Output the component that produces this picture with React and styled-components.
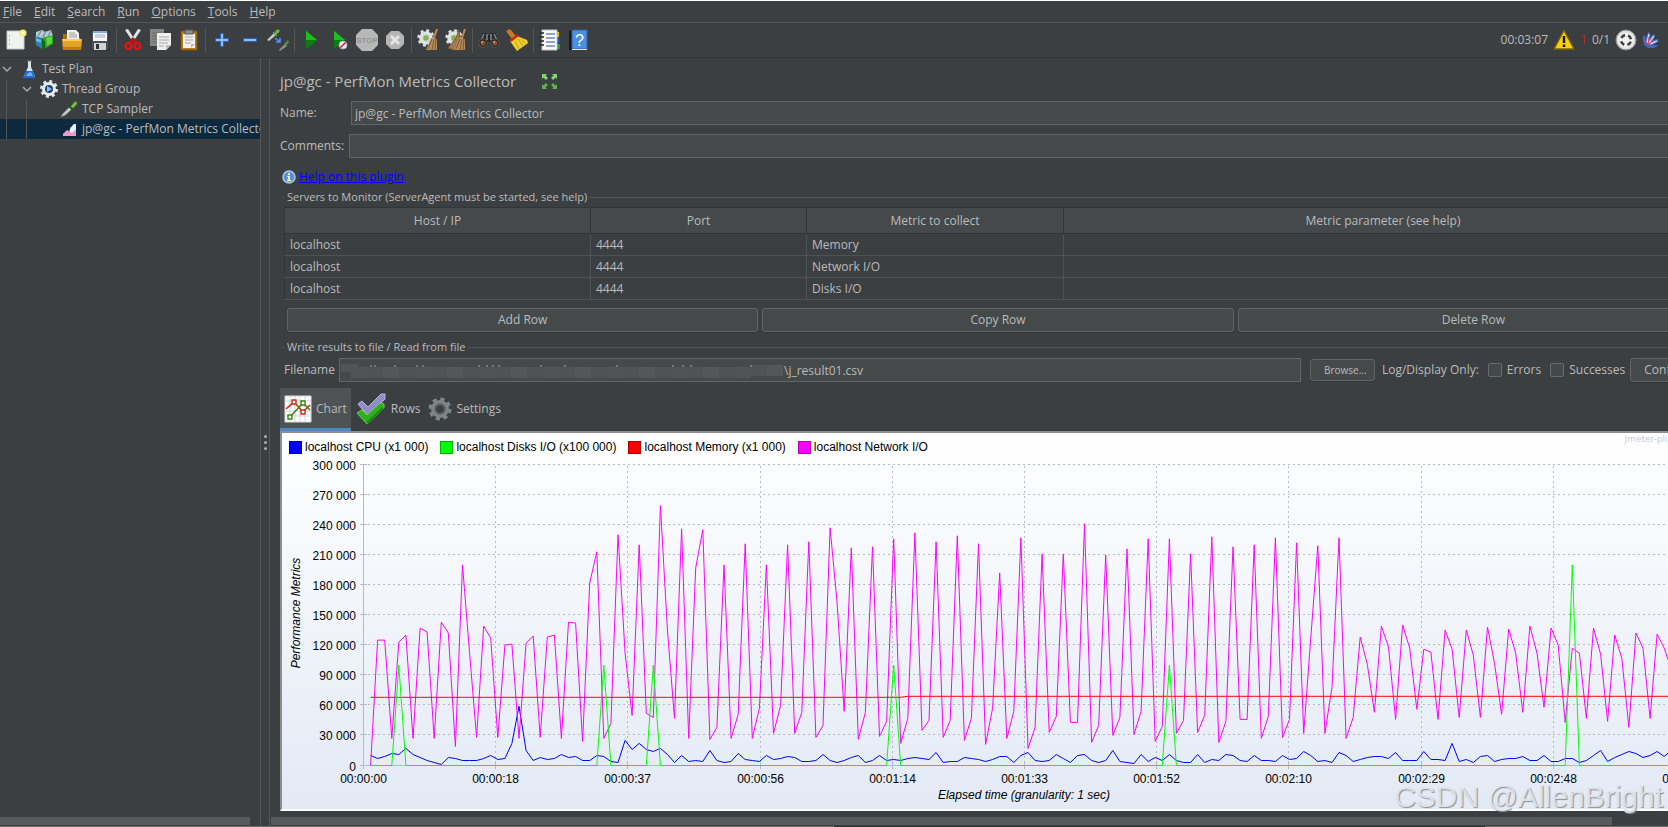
import React from "react";
import styled, { createGlobalStyle } from "styled-components";

const menus = ["File", "Edit", "Search", "Run", "Options", "Tools", "Help"];

const servers = [
    { host: "localhost", port: "4444", metric: "Memory" },
    { host: "localhost", port: "4444", metric: "Network I/O" },
    { host: "localhost", port: "4444", metric: "Disks I/O" },
];

const legend = [
    { label: "localhost CPU (x1 000)", color: "#0000ff" },
    { label: "localhost Disks I/O (x100 000)", color: "#00ff00" },
    { label: "localhost Memory (x1 000)", color: "#ff0000" },
    { label: "localhost Network I/O", color: "#ff00ff" },
];

// one value per second, in thousands, first one at second 1
const network = [
    0, 125, 125, 27, 123, 130, 27, 137, 133, 27, 143, 132, 19, 200, 113, 28, 139, 127, 28, 120,
    121, 27, 122, 129, 28, 128, 130, 27, 143, 142, 24, 182, 213, 27, 42, 230, 112, 50, 220, 52,
    48, 259, 134, 47, 236, 27, 197, 235, 26, 38, 200, 27, 51, 221, 27, 57, 200, 32, 60, 220,
    32, 53, 223, 28, 40, 237, 162, 54, 217, 26, 53, 218, 29, 44, 226, 22, 47, 232, 35, 45,
    223, 28, 45, 229, 25, 47, 221, 21, 57, 192, 27, 54, 227, 17, 38, 211, 33, 49, 211, 43,
    43, 241, 23, 40, 210, 30, 48, 216, 31, 54, 226, 24, 39, 226, 32, 45, 211, 33, 50, 228,
    23, 44, 218, 46, 46, 220, 27, 49, 227, 28, 46, 222, 32, 126, 219, 32, 78, 227, 27, 48,
    128, 101, 53, 139, 118, 46, 140, 117, 56, 116, 113, 46, 135, 116, 48, 135, 110, 48, 138, 102,
    51, 136, 112, 53, 139, 112, 58, 137, 120, 43, 117, 112, 47, 137, 111, 44, 130, 107, 38, 132,
    117, 47, 131, 117, 96, 50,
];

const cpu = [
    10, 7, 9, 12, 11, 17, 11, 8, 5, 3, 1, 8, 7, 5, 5, 5, 7, 10, 6, 7,
    22, 59, 15, 5, 8, 6, 7, 11, 8, 9, 5, 5, 10, 9, 4, 3, 25, 16, 22, 16,
    14, 17, 11, 3, 10, 4, 5, 4, 15, 5, 3, 4, 12, 6, 5, 4, 10, 6, 7, 9,
    8, 4, 4, 5, 11, 5, 3, 5, 8, 10, 3, 5, 10, 5, 6, 5, 7, 8, 7, 6,
    13, 3, 4, 4, 8, 7, 6, 4, 6, 9, 9, 3, 10, 13, 5, 4, 5, 11, 7, 3,
    10, 11, 5, 3, 5, 15, 4, 3, 2, 11, 4, 8, 5, 11, 5, 3, 3, 11, 3, 6,
    5, 11, 10, 5, 4, 10, 5, 5, 4, 10, 6, 7, 14, 10, 4, 5, 3, 13, 10, 4,
    6, 8, 9, 9, 7, 13, 5, 5, 5, 14, 6, 6, 5, 22, 4, 6, 3, 9, 10, 4,
    6, 7, 7, 9, 5, 5, 10, 4, 4, 7, 7, 3, 5, 10, 15, 4, 8, 11, 14, 12,
    8, 10, 14, 9, 15, 12,
];

const diskPeaks = { 5: 100, 34: 100, 41: 100, 75: 100, 114: 100, 171: 200 };
const disks = network.map((_, i) => diskPeaks[i + 1] || 0);
const memory = network.map((_, i) => (i < 76 ? 68 : 69));

const times = ["00:00:00", "00:00:18", "00:00:37", "00:00:56", "00:01:14", "00:01:33", "00:01:52", "00:02:10", "00:02:29", "00:02:48", "00:03:07"];

const PLOT = { left: 81, top: 7, bottom: 308, second: 7.069, tick: 132.2, right: 1402 };

function toPoints(values) {
    return values
        .map((v, i) => {
            const x = PLOT.left + 0.5 + (i + 1) * PLOT.second;
            const y = PLOT.bottom + 0.5 - v * 1.003;
            return `${x.toFixed(1)},${y.toFixed(1)}`;
        })
        .join(" ");
}

/* ---------- icons ---------- */

function NewIcon() {
    return (
        <Icon viewBox="0 0 22 22">
            <path d="M2 2h17v18H2z" fill="#f1f1f0" stroke="#c9c9c7" />
            <path d="M4 7h1M4 11h1M4 15h1" stroke="#888" />
            <circle cx="18" cy="4" r="3.6" fill="#f3e868" />
            <circle cx="18" cy="4" r="1.8" fill="#fffde0" />
        </Icon>
    );
}

function TemplatesIcon() {
    return (
        <Icon viewBox="0 0 22 22">
            <path d="M3 3l6-2 3 2 6-2 2 6-8 3-9-2z" fill="#b9cbd3" />
            <path d="M5 7l3-5M10 8l3-6M15 7l3-5" stroke="#6d8996" strokeWidth="1.2" />
            <path d="M2 7l7 2v11l-6-4z" fill="#2c7fb4" />
            <path d="M3 9l5 2v3l-5-2z" fill="#6fb6de" />
            <path d="M9 9l11-3v9l-9 5-2-1z" fill="#22a527" />
            <path d="M13 9l6-2v7l-5 3z" fill="#5fd63c" />
            <path d="M9 9l3 4v8l-3-1z" fill="#0f6b1b" />
        </Icon>
    );
}

function OpenIcon() {
    return (
        <Icon viewBox="0 0 22 22">
            <path d="M2 11V5h6l2 3h9v4z" fill="#a86d10" />
            <path d="M6 1h9l3 3v9H6z" fill="#f0f0ef" />
            <path d="M8 4h6M8 6h8M8 8h8" stroke="#999" />
            <path d="M1 10h18l2 1-1 10H2z" fill="#e6a325" />
            <path d="M1 10h20l-1 2H2z" fill="#f6cc66" />
            <path d="M2 18h18v3H2z" fill="#bd7d12" />
        </Icon>
    );
}

function SaveIcon() {
    return (
        <Icon viewBox="0 0 22 22">
            <path d="M2 2h18v19H4l-2-2z" fill="#4c5053" stroke="#2c2e30" />
            <path d="M4 2h14v10H4z" fill="#f2f5fa" />
            <path d="M4 2h14v2H4z" fill="#87a9dc" />
            <path d="M6 6h10M6 8h10" stroke="#a5adb8" />
            <path d="M5 14h12v7H5z" fill="#d0d2d4" />
            <path d="M7 15h3v5H7z" fill="#2e3133" />
        </Icon>
    );
}

function CutIcon() {
    return (
        <Icon viewBox="0 0 22 22">
            <path d="M3 1l8 12 2-2L6 0zM19 1l-8 12-2-2 7-11z" fill="#e4e4e4" />
            <path d="M11 10l3 4M11 10l-3 4" stroke="#c01111" strokeWidth="3" />
            <circle cx="6.500" cy="17" r="3" fill="none" stroke="#d81414" strokeWidth="2.600" />
            <circle cx="15.500" cy="17" r="3" fill="none" stroke="#d81414" strokeWidth="2.600" />
        </Icon>
    );
}

function CopyIcon() {
    return (
        <Icon viewBox="0 0 22 22">
            <path d="M0 0h14v17H0z" fill="#858585" />
            <path d="M2 4h10M2 7h8M2 10h6M2 13h6" stroke="#6b6b6b" />
            <path d="M7 4h14v12l-5 5H7z" fill="#efefee" />
            <path d="M9 8h10M9 11h10M9 14h9M9 17h5" stroke="#a8a8a8" />
            <path d="M16 21v-5h5z" fill="#bdbdbd" />
        </Icon>
    );
}

function PasteIcon() {
    return (
        <Icon viewBox="0 0 22 22">
            <path d="M3 2h16v19H3z" fill="#b57c1c" stroke="#7c500b" />
            <path d="M5 5h12v14H5z" fill="#f1f1f0" />
            <path d="M7 8h8M7 11h8M7 14h6" stroke="#a3a3a3" />
            <path d="M13 19v-4h4z" fill="#bcbcbc" />
            <path d="M7 1h8v4H7z" fill="#8c9096" stroke="#54575b" />
        </Icon>
    );
}

function PlusIcon({ minus }) {
    return (
        <Icon viewBox="0 0 22 22">
            <path d={minus ? "M4 11h14" : "M4 11h14M11 4v14"} stroke="#2b62b8" strokeWidth="4" />
            <path d={minus ? "M5 11h12" : "M5 11h12M11 5v12"} stroke="#8ebdf2" strokeWidth="2" />
        </Icon>
    );
}

function PipetteIcon({ size }) {
    return (
        <Icon viewBox="0 0 22 22" $size={size}>
            <path d="M1 21l2-4 9-9 3 3-9 8z" fill="#c9cfc9" stroke="#5f6660" />
            <path d="M10 6l6 6" stroke="#2d4f22" strokeWidth="3" />
            <path d="M13 8l5-6 2 0 1 3-5 5z" fill="#74c452" stroke="#3d7e28" />
        </Icon>
    );
}

function ToggleIcon() {
    return (
        <Icon viewBox="0 0 22 22">
            <path d="M0 11l7-7 2 2-7 6z" fill="#c4ccc2" />
            <path d="M6 3l4 4M7 5l3-4 2 0 0 2-4 3z" fill="#67b846" stroke="#67b846" />
            <path d="M8 9l5 4M13 9v4H9" stroke="#4f93ee" strokeWidth="1.600" fill="none" />
            <path d="M12 21l6-6 2 2-7 5z" fill="#909590" />
            <path d="M17 15l4-4 1 2-3 4z" fill="#5c8a4b" />
        </Icon>
    );
}

function StartIcon({ noPause }) {
    return (
        <Icon viewBox="0 0 22 22">
            <path d="M6 2l11 9-11 9z" fill="#12a312" />
            <path d="M6 2l11 9H6z" fill="#1cc01c" />
            <path d="M6 20l11-9H6z" fill="#087d0b" />
            {noPause && (
                <g>
                    <circle cx="15" cy="16" r="4" fill="#e9eef8" stroke="#a4b4d2" />
                    <path d="M12 19l6-6" stroke="#d72222" strokeWidth="1.600" />
                </g>
            )}
        </Icon>
    );
}

function StopIcon() {
    return (
        <Icon viewBox="0 0 22 22">
            <path d="M6 0h10l6 6v10l-6 6H6l-6-6V6z" fill="#b7b7b7" />
            <text x="11" y="14" fontSize="8" fontWeight="bold" fontFamily="Liberation Sans, sans-serif" textAnchor="middle" fill="#949494">STOP</text>
        </Icon>
    );
}

function ShutdownIcon() {
    return (
        <Icon viewBox="0 0 22 22">
            <path d="M7 2h8l5 5v8l-5 5H7l-5-5V7z" fill="#b5b5b5" />
            <path d="M7 7l8 8M15 7l-8 8" stroke="#e6e6e6" strokeWidth="2.800" />
        </Icon>
    );
}

function ClearIcon({ all }) {
    return (
        <Icon viewBox="0 0 22 22">
            <circle cx="9" cy="9" r="7.500" fill="none" stroke="#dfe3e3" strokeWidth="2.400" strokeDasharray="3 2.890" />
            <circle cx="9" cy="9" r="6.800" fill="#dfe3e3" />
            <circle cx="9" cy="9" r="3" fill="#7fb93c" stroke="#b5bdb5" />
            {all && <path d="M14 1l-3 8-8 10 6 2 6-10z" fill="#a37a4d" stroke="#7d5933" />}
            <path d="M20 0l-3 9" stroke="#c08a4c" strokeWidth="2" />
            <path d="M14 9l6 1v11H9z" fill="#b58d5d" />
            <path d="M15 10l-4 10M17 10l-2 11M19 10l-1 11" stroke="#7d5933" />
        </Icon>
    );
}

function SearchIcon() {
    return (
        <Icon viewBox="0 0 22 22">
            <path d="M5 4h4l2 3 2-3h4l5 10-8 2-3-4-3 4-8-2z" fill="#25282a" />
            <path d="M6 5l-3 6M9 5v6M13 5v6M16 5l3 6" stroke="#858a8d" strokeWidth="1.500" />
            <circle cx="5" cy="14" r="4.200" fill="#1b1c1d" stroke="#5d6164" />
            <circle cx="17" cy="14" r="4.200" fill="#1b1c1d" stroke="#5d6164" />
            <circle cx="5" cy="14" r="2.600" fill="#8f502c" />
            <circle cx="17" cy="14" r="2.600" fill="#8f502c" />
            <circle cx="4" cy="13" r="1" fill="#d9a37a" />
            <circle cx="16" cy="13" r="1" fill="#d9a37a" />
        </Icon>
    );
}

function ResetIcon() {
    return (
        <Icon viewBox="0 0 22 22">
            <path d="M0 2l4-2 6 7-4 3z" fill="#c47c22" />
            <path d="M11 7l10 4 1 3-11 8-7-10z" fill="#f0d02a" />
            <path d="M9 12l4 8M12 10l5 7M15 10l4 4" stroke="#c79f12" />
            <path d="M4 11l7-6 2 2-8 6z" fill="#d4231e" />
        </Icon>
    );
}

function FunctionIcon() {
    return (
        <Icon viewBox="0 0 22 22">
            <path d="M17 3h3v5h-3z" fill="#e6b524" />
            <path d="M17 9h4v5h-4z" fill="#1b52b8" />
            <path d="M17 15h4v5h-4z" fill="#2ba02b" />
            <path d="M3 1h15v20H3z" fill="#fafafa" stroke="#c2c2c2" />
            <path d="M7 5h9M7 9h9M7 13h9M7 17h9" stroke="#2352a0" strokeWidth="1.200" />
            <path d="M1 4h4M1 8h4M1 12h4M1 16h4" stroke="#222" strokeWidth="1.500" />
        </Icon>
    );
}

function HelpIcon() {
    return (
        <Icon viewBox="0 0 22 22">
            <path d="M2 2l3-1v20H2z" fill="#17191b" />
            <path d="M5 1h15v19H5z" fill="#4d8fe0" stroke="#2f62a8" />
            <path d="M5 20h15v1H5z" fill="#e4e4e4" />
            <text x="12.500" y="16.500" fontSize="16" fontFamily="Liberation Sans, sans-serif" textAnchor="middle" fill="#fff">?</text>
        </Icon>
    );
}

function WarningIcon() {
    return (
        <Icon viewBox="0 0 22 22">
            <path d="M11 1.500L21 20H1z" fill="#f8cf08" stroke="#7a6504" strokeWidth="1.500" strokeLinejoin="round" />
            <path d="M11 7v7M11 15.500v2.500" stroke="#111" strokeWidth="2.400" />
        </Icon>
    );
}

function ThreadsIcon() {
    return (
        <Icon viewBox="0 0 22 22">
            <circle cx="11" cy="11" r="10" fill="#e0e0e0" stroke="#8b8b8b" />
            <circle cx="11" cy="11" r="7.500" fill="#f1f1f1" />
            <circle cx="11" cy="11" r="5" fill="none" stroke="#404244" strokeWidth="2.600" strokeDasharray="4.600 3.254" strokeDashoffset="-1.600" />
        </Icon>
    );
}

function FeatherIcon() {
    return (
        <Icon viewBox="0 0 18 18" $size={18}>
            <path d="M2 14Q0 9 1 5l2-1 1 3 2-6 2 1v4l3-3 2 1-2 5 5-1 1 2-6 4 4 0 1 1-4 2H6z" fill="#3f66bb" />
            <path d="M5 12l2-9M7 12l5-7M8 13l7-3" stroke="#c5d8ff" strokeWidth="1.500" />
            <path d="M2 10l6 4M7 6l-1 8M11 8l-4 6" stroke="#e2444e" />
        </Icon>
    );
}

function FlaskIcon() {
    return (
        <Icon viewBox="0 0 18 18" $size={18}>
            <path d="M8 1h3v6l4 9q0 2-2 2H5q-2 0-1-2l4-9z" fill="#d7e4ee" />
            <path d="M6 11h7l2 5q0 2-2 2H5q-2 0-1-2z" fill="#2268cf" />
            <path d="M8 13l3-1 2 4H6z" fill="#68b2fa" />
            <path d="M7 1h5" stroke="#6d7c88" />
        </Icon>
    );
}

function ThreadGroupIcon() {
    return (
        <Icon viewBox="0 0 18 18" $size={18}>
            <circle cx="9" cy="9" r="7.500" fill="none" stroke="#dfe6ea" strokeWidth="3" strokeDasharray="2.950 2.940" />
            <circle cx="9" cy="9" r="7" fill="#e5ebef" />
            <circle cx="9" cy="9" r="4" fill="#24466e" />
            <path d="M7 6l5 3-5 3z" fill="#8fbdec" />
        </Icon>
    );
}

function PerfMonIcon() {
    return (
        <Icon viewBox="0 0 18 18" $size={18}>
            <path d="M1.500 1v15.500H17" stroke="#15202b" strokeDasharray="1 1" fill="none" />
            <path d="M10 16V8l4-4h2v12z" fill="#a9cdf8" />
            <path d="M3 16v-2l4-4 3 2 3-3 3 3v4z" fill="#ee9ad2" />
            <path d="M9 11l5-7h2v5l-4 4z" fill="#e6f1ff" />
        </Icon>
    );
}

function InfoIcon() {
    return (
        <Icon viewBox="0 0 14 14" $size={14}>
            <circle cx="7" cy="7" r="6" fill="#5b90cd" stroke="#a6caef" strokeWidth="1.500" />
            <path d="M7 3v2M5.500 6.500H7V10M5 10.500h4" stroke="#fff" strokeWidth="1.500" fill="none" />
        </Icon>
    );
}

function ExpandIcon() {
    return (
        <Icon viewBox="0 0 17 17" $size={17}>
            <path d="M1 1h5L4.500 2.500 7 5 5 7 2.500 4.500 1 6zM16 1h-5l1.500 1.500L10 5l2 2 2.500-2.500L16 6z" fill="#84d873" />
            <path d="M1 16h5l-1.500-1.500L7 12l-2-2-2.500 2.500L1 11zM16 16h-5l1.500-1.500L10 12l2-2 2.500 2.500L16 11z" fill="#5db252" />
        </Icon>
    );
}

function ChartTabIcon() {
    return (
        <Icon viewBox="0 0 28 28" $size={28}>
            <path d="M1 1h26v26H1z" fill="#fff" stroke="#dadada" />
            <path d="M6 1v26M11 1v26M16 1v26M21 1v26M1 6h26M1 11h26M1 16h26M1 21h26" stroke="#d5d5d5" />
            <path d="M2 14l8-7 9 10 7-7" stroke="#c92a1d" strokeWidth="1.500" fill="none" />
            <path d="M5 23l14-15 7 7" stroke="#368714" strokeWidth="1.500" fill="none" />
            <path d="M8 5h4v4H8zM17 15h4v4h-4z" fill="#fff" stroke="#c92a1d" strokeWidth="1.400" />
            <path d="M4 20h4v4H4zM17 6h4v4h-4z" fill="#fff" stroke="#368714" strokeWidth="1.400" />
        </Icon>
    );
}

function RowsTabIcon() {
    return (
        <Icon viewBox="0 0 32 32" $size={32}>
            <path d="M3 11l4-3 6 6L26 1l4 0 0 5L13 23z" fill="#8f8cc8" stroke="#b9b7e0" />
            <path d="M2 20l5-3 5 5 13-12 4 1v4L12 31z" fill="#2fae1e" stroke="#6bd24f" />
            <path d="M12 30l16-15" stroke="#17870f" strokeWidth="2" />
        </Icon>
    );
}

function SettingsTabIcon() {
    return (
        <Icon viewBox="0 0 24 24" $size={24}>
            <circle cx="12" cy="12" r="9.500" fill="none" stroke="#7e8788" strokeWidth="4" strokeDasharray="4 3.460" />
            <circle cx="12" cy="12" r="6.500" fill="none" stroke="#7e8788" strokeWidth="5" />
            <circle cx="12" cy="12" r="5" fill="none" stroke="#59615f" strokeWidth="1.500" />
        </Icon>
    );
}

function Chevron() {
    return (
        <Icon viewBox="0 0 10 10" $size={10}>
            <path d="M1 3l4 4 4-4" stroke="#aaa" strokeWidth="1.500" fill="none" />
        </Icon>
    );
}

// covered part of the path in the filename box
function HiddenPath() {
    const blocks = Array.from({ length: 27 }, (_, i) => i);
    const bits = [30, 34, 54, 76, 82, 138, 146, 152, 158, 200, 224, 276, 332, 342, 350, 410];
    return (
        <Mosaic viewBox="0 0 442 18" preserveAspectRatio="none" aria-hidden="true">
            <rect x="0" y="3" width="17" height="8" fill="#505455" />
            {blocks.map((i) => (
                <rect key={i} x={10 + i * 16} y={i > 24 ? 4 : 6} width="16" height="11" fill={["#505455", "#4e5253", "#535758", "#4f5354"][(i * 7) % 4]} />
            ))}
            {bits.map((x) => (
                <path key={x} d={`M${x} 4v2`} stroke="#a3a5a6" />
            ))}
        </Mosaic>
    );
}

const toolGroups = [
    [["New", <NewIcon />], ["Templates", <TemplatesIcon />], ["Open", <OpenIcon />], ["Save", <SaveIcon />]],
    [["Cut", <CutIcon />], ["Copy", <CopyIcon />], ["Paste", <PasteIcon />]],
    [["Expand all", <PlusIcon />], ["Collapse all", <PlusIcon minus />], ["Toggle", <ToggleIcon />]],
    [["Start", <StartIcon />], ["Start no pauses", <StartIcon noPause />], ["Stop", <StopIcon />], ["Shutdown", <ShutdownIcon />]],
    [["Clear", <ClearIcon />], ["Clear all", <ClearIcon all />]],
    [["Search", <SearchIcon />], ["Reset search", <ResetIcon />]],
    [["Function helper", <FunctionIcon />], ["Help", <HelpIcon />]],
];

function Toolbar() {
    return (
        <ToolbarRow>
            {toolGroups.map((group, g) => (
                <React.Fragment key={g}>
                    {g > 0 && <Separator />}
                    {group.map(([name, icon]) => (
                        <ToolButton key={name} aria-label={name}>{icon}</ToolButton>
                    ))}
                </React.Fragment>
            ))}
            <Status>
                <span>00:03:07</span>
                <WarningIcon />
                <ErrorCount>1</ErrorCount>
                <span>0/1</span>
                <ThreadsIcon />
                <FeatherIcon />
            </Status>
        </ToolbarRow>
    );
}

function Tree() {
    return (
        <TreePane>
            <TreeRow $level={0}><Chevron /><TreeIcon><FlaskIcon /></TreeIcon>Test Plan</TreeRow>
            <TreeRow $level={1} $guides={1}><Chevron /><TreeIcon><ThreadGroupIcon /></TreeIcon>Thread Group</TreeRow>
            <TreeRow $level={2} $guides={2}><TreeIcon><PipetteIcon size={18} /></TreeIcon>TCP Sampler</TreeRow>
            <TreeRow $level={2} $guides={2} $selected><TreeIcon><PerfMonIcon /></TreeIcon>jp@gc - PerfMon Metrics Collector</TreeRow>
            <ScrollTrack $start={0}><ScrollThumb $width="96%" /></ScrollTrack>
        </TreePane>
    );
}

function Chart() {
    return (
        <ChartPanel>
            <LegendRow>
                {legend.map((item) => (
                    <LegendItem key={item.label}><Swatch $color={item.color} />{item.label}</LegendItem>
                ))}
                <Credit>jmeter-plugins.org</Credit>
            </LegendRow>
            <Plot role="img" aria-label="Performance Metrics">
                {times.map((t, i) => {
                    const x = Math.round(PLOT.left + i * PLOT.tick) + 0.5;
                    return (
                        <g key={t}>
                            {i > 0 && <path d={`M${x} ${PLOT.top + 2}V${PLOT.bottom}`} stroke="#b4bac6" strokeDasharray="2 3" />}
                            <path d={`M${x} ${PLOT.bottom - 3}v7`} stroke="#b4bac6" />
                            <text x={x} y="326" textAnchor="middle">{t}</text>
                        </g>
                    );
                })}
                {Array.from({ length: 11 }, (_, i) => {
                    const y = i === 10 ? PLOT.bottom + 0.5 : PLOT.top + i * 30 + 0.5;
                    const value = 300 - i * 30;
                    return (
                        <g key={i}>
                            <path d={`M${PLOT.left} ${y}H${PLOT.right}`} stroke="#b4bac6" strokeDasharray={i === 10 ? "none" : "2 3"} />
                            <path d={`M${PLOT.left - 3} ${y}h7`} stroke="#b4bac6" />
                            <text x="74" y={y + 5} textAnchor="end">{value === 0 ? "0" : `${value} 000`}</text>
                        </g>
                    );
                })}
                <path d={`M${PLOT.left + 0.5} ${PLOT.top}V${PLOT.bottom + 4}`} stroke="#b4bac6" />
                <Line points={toPoints(cpu)} $color="#0000ff" />
                <Line points={toPoints(network)} $color="#ff00ff" />
                <Line points={toPoints(memory)} $color="#ff0000" />
                <Line points={toPoints(disks)} $color="#00ff00" />
                <AxisTitle x="742" y="342" textAnchor="middle">Elapsed time (granularity: 1 sec)</AxisTitle>
                <AxisTitle transform="translate(18 156) rotate(-90)" textAnchor="middle">Performance Metrics</AxisTitle>
            </Plot>
        </ChartPanel>
    );
}

export default function App() {
    const [tab, setTab] = React.useState("Chart");
    const [name, setName] = React.useState("jp@gc - PerfMon Metrics Collector");
    const [comments, setComments] = React.useState("");
    const [filename, setFilename] = React.useState("\\j_result01.csv");

    const tabs = [["Chart", <ChartTabIcon />], ["Rows", <RowsTabIcon />], ["Settings", <SettingsTabIcon />]];

    return (
        <Window>
            <GlobalStyle />
            <MenuBar>
                {menus.map((m) => (
                    <MenuButton key={m}><u>{m[0]}</u>{m.slice(1)}</MenuButton>
                ))}
            </MenuBar>
            <Toolbar />
            <Body>
                <Tree />
                <Divider><i /><i /><i /></Divider>
                <Main>
                    <Content>
                        <TitleRow>
                            <h1>{name}</h1>
                            <ExpandIcon />
                        </TitleRow>
                        <Field>
                            <FieldLabel htmlFor="name" $width={71}>Name:</FieldLabel>
                            <TextInput id="name" value={name} onChange={(e) => setName(e.target.value)} />
                        </Field>
                        <Field>
                            <FieldLabel htmlFor="comments" $width={69}>Comments:</FieldLabel>
                            <TextInput id="comments" value={comments} onChange={(e) => setComments(e.target.value)} />
                        </Field>
                        <HelpRow>
                            <InfoIcon />
                            <a href="#help">Help on this plugin</a>
                        </HelpRow>
                        <Group>
                            <legend>Servers to Monitor (ServerAgent must be started, see help)</legend>
                            <Table>
                                <colgroup>
                                    <col width="306" />
                                    <col width="216" />
                                    <col width="257" />
                                    <col />
                                </colgroup>
                                <thead>
                                    <tr>
                                        <th>Host / IP</th>
                                        <th>Port</th>
                                        <th>Metric to collect</th>
                                        <th>Metric parameter (see help)</th>
                                    </tr>
                                </thead>
                                <tbody>
                                    {servers.map((s) => (
                                        <tr key={s.metric}>
                                            <td>{s.host}</td>
                                            <td>{s.port}</td>
                                            <td>{s.metric}</td>
                                            <td></td>
                                        </tr>
                                    ))}
                                </tbody>
                            </Table>
                            <RowButtons>
                                <Button>Add Row</Button>
                                <Button>Copy Row</Button>
                                <Button>Delete Row</Button>
                            </RowButtons>
                        </Group>
                        <Group>
                            <legend>Write results to file / Read from file</legend>
                            <FileRow>
                                <FieldLabel htmlFor="filename" $width={55}>Filename</FieldLabel>
                                <FileBox>
                                    <TextInput id="filename" $indent={444} value={filename} onChange={(e) => setFilename(e.target.value)} />
                                    <HiddenPath />
                                </FileBox>
                                <Button $small>Browse...</Button>
                                <span>Log/Display Only:</span>
                                <Check><input type="checkbox" />Errors</Check>
                                <Check><input type="checkbox" />Successes</Check>
                                <Button $wide>Configure</Button>
                            </FileRow>
                        </Group>
                        <Tabs>
                            {tabs.map(([label, icon]) => (
                                <Tab key={label} $active={tab === label} onClick={() => setTab(label)}>{icon}{label}</Tab>
                            ))}
                        </Tabs>
                        <Chart />
                    </Content>
                    <ScrollTrack $start={1}><ScrollThumb $width="96%" /></ScrollTrack>
                    <Watermark>CSDN @AllenBright</Watermark>
                </Main>
            </Body>
            <BottomEdge />
        </Window>
    );
}

const GlobalStyle = createGlobalStyle`
    * {
        box-sizing: border-box;
    }

    body {
        margin: 0;
        background: #3c3f41;
        color: #bbbbbb;
        font-family: "Open Sans", "Noto Sans", sans-serif;
        font-size: 12px;
        line-height: 16px;
        overflow: hidden;
    }

    button, input {
        font: inherit;
        color: inherit;
    }
`

const Window = styled.div`
    height: 100vh;
    display: flex;
    flex-direction: column;
    border-top: 1px solid #ffffff;
`

const Icon = styled.svg`
    width: ${props => props.$size || 22}px;
    height: ${props => props.$size || 22}px;
    flex: none;
    display: block;
    fill: none;
`

const MenuBar = styled.nav`
    display: flex;
    gap: 12px;
    height: 22px;
    padding: 0 3px;
    border-bottom: 1px solid #555555;
`

const MenuButton = styled.button`
    border: 0;
    padding: 0;
    background: none;
`

const ToolbarRow = styled.div`
    display: flex;
    align-items: center;
    height: 35px;
    padding: 0 8px 0 2px;
    border-bottom: 1px solid #323537;
`

const ToolButton = styled.button`
    width: 28px;
    height: 28px;
    padding: 0 3px;
    border: 0;
    background: none;
`

const Separator = styled.span`
    width: 1px;
    height: 25px;
    margin: 0 2px;
    background: #555555;
`

const Status = styled.div`
    display: flex;
    align-items: center;
    gap: 5px;
    margin-left: auto;
`

const ErrorCount = styled.span`
    color: #e01010;
`

const Body = styled.div`
    flex: 1;
    min-height: 0;
    display: flex;
`

const TreePane = styled.aside`
    width: 261px;
    flex: none;
    display: flex;
    flex-direction: column;
    border-right: 1px solid #555555;
    padding-top: 1px;
    overflow: hidden;
`

const guides = [
    "none",
    "linear-gradient(#555555, #555555) 6px 0 / 1px 100% no-repeat",
    "linear-gradient(#555555, #555555) 6px 0 / 1px 100% no-repeat, linear-gradient(#555555, #555555) 26px 0 / 1px 100% no-repeat",
]

const TreeRow = styled.div`
    display: flex;
    align-items: center;
    height: 20px;
    padding-left: ${props => [2, 22, 60][props.$level]}px;
    background: ${props => guides[props.$guides || 0]};
    background-color: ${props => (props.$selected ? "#0d293e" : "transparent")};
    white-space: nowrap;
`

const TreeIcon = styled.span`
    margin: 0 4px 0 0;

    svg + & {
        margin-left: 8px;
    }
`

const Divider = styled.div`
    width: 9px;
    flex: none;
    display: flex;
    flex-direction: column;
    align-items: center;
    justify-content: center;
    gap: 3px;
    border-right: 1px solid #555555;

    i {
        width: 3px;
        height: 3px;
        border-radius: 50%;
        background: #adadad;
    }
`

const Main = styled.main`
    flex: 1;
    min-width: 0;
    position: relative;
    display: flex;
    flex-direction: column;
    overflow: hidden;
`

const Content = styled.div`
    flex: 1;
    width: calc(100% + 44px);
    display: flex;
    flex-direction: column;
    padding-left: 10px;
`

const TitleRow = styled.div`
    display: flex;
    align-items: center;
    gap: 25px;
    height: 43px;
    padding-top: 3px;

    h1 {
        margin: 0;
        font-size: 15px;
        line-height: 20px;
        font-weight: 400;
    }
`

const Field = styled.div`
    display: flex;
    align-items: center;
    margin-bottom: 9px;
`

const FieldLabel = styled.label`
    width: ${props => props.$width}px;
    flex: none;
`

const TextInput = styled.input`
    flex: 1;
    min-width: 0;
    height: 24px;
    padding: 0 3px 0 ${props => props.$indent || 3}px;
    border: 1px solid #646464;
    background: #45494a;
`

const HelpRow = styled.div`
    display: flex;
    align-items: center;
    gap: 3px;
    height: 20px;
    margin-bottom: 2px;
    padding-left: 2px;

    a {
        color: #0000ff;
    }
`

const Group = styled.fieldset`
    margin: 0 0 0 2px;
    padding: 0 3px 0 2px;
    border: 0;
    border-top: 1px solid #555555;
    min-width: 0;

    legend {
        margin: 0;
        padding: 0 3px;
        font-size: 11px;
    }

    & + & {
        margin-top: 7px;
    }
`

const Table = styled.table`
    width: calc(100% - 6px);
    table-layout: fixed;
    border-collapse: collapse;
    border-bottom: 1px solid #323537;
    margin: 2px 0 8px;

    th {
        height: 26px;
        padding: 0;
        font-weight: 400;
        background: #45494b;
        border: 1px solid #323537;
    }

    td {
        height: 22px;
        padding: 0 5px;
        border: 1px solid #4f5254;
    }

    td:first-child {
        border-left-color: #323537;
    }
`

const Button = styled.button`
    height: ${props => (props.$small ? 22 : 24)}px;
    padding: ${props => (props.$wide ? "0 9px 0 13px" : "0 13px")};
    flex: ${props => (props.$small || props.$wide ? "none" : "1 1 0")};
    width: ${props => (props.$small ? "65px" : "auto")};
    font-size: ${props => (props.$small ? 10 : 12)}px;
    border: 1px solid #646464;
    border-radius: 3px;
    background: #45494a;
    box-shadow: 0 1px 0 #333638;
`

const RowButtons = styled.div`
    display: flex;
    gap: 4px;
    padding-left: 3px;
`

const FileRow = styled.div`
    display: flex;
    align-items: center;
    height: 24px;
    margin-top: 3px;

    > button {
        margin: 0 7px 0 9px;
    }

    > button:last-child {
        margin: 0 0 0 5px;
    }
`

const FileBox = styled.div`
    flex: 1;
    position: relative;
    display: flex;
`

const Mosaic = styled.svg`
    position: absolute;
    left: 2px;
    top: 3px;
    width: 442px;
    height: 18px;
`

const Check = styled.label`
    display: flex;
    align-items: center;
    gap: 5px;
    margin-left: 9px;

    input {
        appearance: none;
        width: 14px;
        height: 14px;
        margin: 0;
        border: 1px solid #6b6b6b;
        border-radius: 2px;
        background: #43494a;
    }
`

const Tabs = styled.div`
    display: flex;
    height: 43px;
    margin-top: 6px;
`

const Tab = styled.button`
    display: flex;
    align-items: center;
    gap: 4px;
    padding: 2px 4px 0;
    border: 0;
    border-bottom: 3px solid ${props => (props.$active ? "#4a88c7" : "transparent")};
    background: ${props => (props.$active ? "#4e5254" : "none")};
`

const ChartPanel = styled.section`
    flex: 1;
    display: flex;
    flex-direction: column;
    border: 1px solid #ffffff;
    border-top: 2px solid #8d8d8d;
    border-left: 2px solid #8d8d8d;
    border-bottom-width: 2px;
    background: linear-gradient(#ffffff, #e3eaf5);
    color: #000000;
    font-family: "Liberation Sans", Arial, sans-serif;
    margin-bottom: 6px;
`

const LegendRow = styled.div`
    display: flex;
    align-items: center;
    gap: 12px;
    height: 24px;
    padding: 4px 0 0 7px;
`

const LegendItem = styled.span`
    display: flex;
    align-items: center;
    gap: 3px;
`

const Swatch = styled.i`
    width: 13px;
    height: 13px;
    background: ${props => props.$color};
    border: 1px solid rgba(0, 0, 0, 0.3);
`

const Credit = styled.span`
    margin: 0 4px 16px auto;
    font-family: "DejaVu Sans", sans-serif;
    font-size: 9px;
    line-height: 12px;
    color: #c8cdd6;
`

const Plot = styled.svg`
    flex: 1;
    width: 100%;
    min-height: 346px;
    font-size: 12px;

    path {
        shape-rendering: crispEdges;
    }
`

const Line = styled.polyline`
    fill: none;
    stroke: ${props => props.$color};
    stroke-width: 1;
`

const AxisTitle = styled.text`
    font-style: italic;
`

const ScrollTrack = styled.div`
    flex: none;
    height: 9px;
    margin-top: auto;
    padding: 0 0 1px ${props => props.$start}px;
`

const ScrollThumb = styled.div`
    width: ${props => props.$width};
    height: 8px;
    background: #585a5c;
`

const Watermark = styled.div`
    position: absolute;
    right: 5px;
    bottom: 11px;
    font-family: "Liberation Sans", Arial, sans-serif;
    font-size: 30px;
    line-height: 36px;
    color: rgba(228, 232, 239, 0.9);
    text-shadow: 1px 1px 1px #8c8f96;
`

const BottomEdge = styled.div`
    height: 1px;
    background: linear-gradient(to right, #6c6c6c 50%, #2f3133 50%, #2f3133 89%, #6c6c6c 89%);
`
